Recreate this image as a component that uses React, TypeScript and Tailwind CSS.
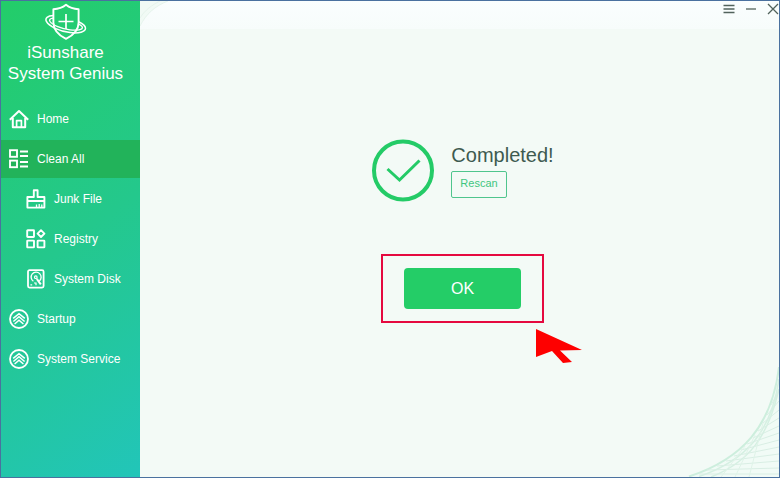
import { ReactNode } from 'react';

const RingUpIcon = () => (
  <svg width="20" height="20" viewBox="0 0 20 20" fill="none" stroke="white" strokeWidth="1.8">
    <circle cx="10" cy="10" r="9" />
    <path d="M4.2 9.4 10 4.6l5.8 4.8M4.4 12.5 10 7.8l5.6 4.7M5.6 15 10 11.2l4.4 3.8" strokeWidth="1.5" />
  </svg>
);

const HomeIcon = () => (
  <svg width="20" height="20" viewBox="0 0 20 20" fill="none" stroke="white" strokeWidth="2" strokeLinejoin="round">
    <path d="M.8 10.8 10 2l9.2 8.8M3.8 9v9.2h12.4V9" />
    <path d="M7.6 18v-6.4h4.8V18" strokeWidth="1.7" />
  </svg>
);

const CleanIcon = () => (
  <svg width="20" height="20" viewBox="0 0 20 20" fill="none" stroke="white" strokeWidth="1.9">
    <rect x="1" y="1.2" width="7" height="6.6" />
    <rect x="1" y="11.6" width="7" height="6.6" />
    <path d="M11 2.5h8M11 7h8M11 13h8M11 17.5h8" />
  </svg>
);

const JunkIcon = () => (
  <svg width="20" height="20" viewBox="0 0 20 20" fill="none" stroke="white" strokeWidth="1.9" strokeLinejoin="round">
    <path d="M7.8 8V1.2h3.8V8h6.8v10.6H1.4V8h6.4ZM1.4 12h17" />
    <path d="M10.5 18.5v-3M13.2 18.5v-3.5M15.8 18.5v-3" strokeWidth="1.3" />
  </svg>
);

const RegistryIcon = () => (
  <svg width="20" height="20" viewBox="0 0 20 20" fill="none" stroke="white" strokeWidth="1.9" strokeLinejoin="round">
    <rect x="1.2" y="1.2" width="6.8" height="6.8" rx=".5" />
    <rect x="1.2" y="11.6" width="6.8" height="6.8" rx=".5" />
    <rect x="11.6" y="11.6" width="6.8" height="6.8" rx=".5" />
    <path d="m15 1.2 3.4 3.4L15 8l-3.4-3.4Z" />
  </svg>
);

const DiskIcon = () => (
  <svg width="20" height="20" viewBox="0 0 20 20" fill="none" stroke="white" strokeWidth="1.8">
    <rect x="2" y="1.2" width="15.6" height="17.4" rx="1.5" />
    <path d="M7.4 12.3A5 5 0 1 1 13.3 12" strokeWidth="1.3" />
    <circle cx="9.8" cy="8.2" r="1.3" strokeWidth="1.2" />
    <path d="m10.8 9.8 4 5.6" strokeWidth="2" />
    <path d="M4.4 15.8h1.8M8 14h2v2.2" strokeWidth="1.2" />
  </svg>
);

type NavItem = { label: string; icon: ReactNode; sub?: boolean; active?: boolean };

const navItems: NavItem[] = [
  { label: 'Home', icon: <HomeIcon /> },
  { label: 'Clean All', icon: <CleanIcon />, active: true },
  { label: 'Junk File', icon: <JunkIcon />, sub: true },
  { label: 'Registry', icon: <RegistryIcon />, sub: true },
  { label: 'System Disk', icon: <DiskIcon />, sub: true },
  { label: 'Startup', icon: <RingUpIcon /> },
  { label: 'System Service', icon: <RingUpIcon /> },
];

function Sidebar() {
  return (
    <aside className="w-[139px] shrink-0 bg-linear-[145deg] from-[#23cd69] via-[#24c88c] to-[#22c5b9] text-white">
      <div className="flex flex-col items-center pt-0.5 pr-2.5">
        <svg width="42" height="38" viewBox="0 0 42 38" fill="none" stroke="white" strokeWidth="1.9" strokeLinejoin="round">
          <path d="M21 1.8c3.6 3 7.6 4.2 12.6 4.4v13.2c0 7.6-5 12.6-12.6 16.4C13.4 32 8.4 27 8.4 19.4V6.2C13.4 6 17.4 4.8 21 1.8Z" />
          <path d="M21 11v15M13.5 18.5h15" strokeWidth="1.7" />
          <path d="M8.4 12.6C2.5 12.8-.2 15.3 1.4 18.4c2.5 4.8 13 9.9 23.6 11.2 9 1.1 15.5-.8 15.5-4.3 0-2.2-2.5-4.6-6.9-6.6" strokeWidth="1.5" />
          <path d="M8.4 15.2c-3.4.2-4.6 1.6-3.4 3.3 2.6 3.7 11.5 7.4 20 8.4 7.4.9 12.4-.2 12.4-2.5 0-1-1.4-2.1-3.8-3.3" strokeWidth="1.3" />
        </svg>
        <h1 className="whitespace-nowrap pt-px text-center text-[17px] leading-[21px]">
          iSunshare
          <br />
          System Genius
        </h1>
      </div>
      <nav className="mt-4 flex flex-col gap-0.5">
        {navItems.map(({ label, icon, sub, active }) => (
          <a
            key={label}
            href="#"
            className={`flex h-[38px] items-center gap-2 text-xs ${sub ? 'pl-[25px]' : 'pl-2'} ${active ? 'bg-[#22b35a]' : ''}`}
          >
            {icon}
            {label}
          </a>
        ))}
      </nav>
    </aside>
  );
}

function TitleBar() {
  return (
    <header className="relative flex h-7 items-start justify-end gap-2.5 bg-linear-to-b from-[#fafefe] to-[#f7fcfb]">
      <svg className="absolute left-0 top-0" width="32" height="26" viewBox="0 0 32 26" fill="none">
        <path d="M0 0h28C15 5 6 13 0 25Z" fill="#f1faf5" />
        <path d="M28 0C15 5 6 13 0 25M20 0C12 4 5 9 0 17" stroke="#e6f4ec" />
      </svg>
      <button aria-label="Menu" className="pt-0.5">
        <svg width="12" height="12" viewBox="0 0 12 12" stroke="#52635c" strokeWidth="1.3">
          <path d="M.5 2.5h11M.5 6h11M.5 9.5h11" />
        </svg>
      </button>
      <button aria-label="Minimize" className="pt-0.5">
        <svg width="12" height="12" viewBox="0 0 12 12" stroke="#52635c" strokeWidth="1.3">
          <path d="M1 6h10" />
        </svg>
      </button>
      <button aria-label="Close" className="pt-0.5">
        <svg width="12" height="12" viewBox="0 0 12 12" stroke="#52635c" strokeWidth="1.3">
          <path d="m1 1 10 10M11 1 1 11" />
        </svg>
      </button>
    </header>
  );
}

function CornerPattern() {
  return (
    <svg className="absolute bottom-0 right-0" width="92" height="112" viewBox="0 0 92 112" fill="none">
      <path d="M92 0C84 62 55 94 0 112H92Z" fill="#f1fbf6" />
      <path d="M92 2C85 61 55 94 2 111.5" stroke="#cdeedd" strokeWidth="2" />
      <path d="M92 14C84 67 60 95 12 111.5M92 24C81 72 62 97 24 112" stroke="#d5f0e2" strokeWidth="1.5" />
      <path
        d="M84 40 92 26M80 50 92 36M76 58 92 45M71 66 92 53M66 73 92 61M60 79 92 68M54 85 92 75M47 91 92 82M39 96 92 89M30 101 92 96M20 105 92 103M12 109 92 109"
        stroke="#d9eee4"
      />
      <path d="M68 70 48 112M58 81 34 112M76 58 62 112" stroke="#dff3e8" />
    </svg>
  );
}

export default function App() {
  return (
    <div className="flex min-h-screen border border-[#4a719f] bg-[#f3faf6] font-['Liberation_Sans',Arial,sans-serif]">
      <Sidebar />
      <div className="relative flex flex-1 flex-col">
        <TitleBar />
        <CornerPattern />
        <main className="relative flex flex-1 flex-col items-center justify-center pb-11 pl-1.5">
          <div className="flex items-center gap-4">
            <svg width="64" height="64" viewBox="0 0 64 64" fill="none" stroke="#24cb67">
              <circle cx="32" cy="31.5" r="29" strokeWidth="4" />
              <path d="m16.5 30 12 11L48.5 21.5" strokeWidth="3" />
            </svg>
            <div className="flex flex-col items-start gap-1 pb-0.5">
              <h2 className="text-xl leading-6 text-[#3e5b50]">Completed!</h2>
              <button className="h-[27px] rounded-xs border border-[#4fc58d] px-2 pb-0.5 text-[11px] text-[#3fc67f]">
                Rescan
              </button>
            </div>
          </div>
          <div className="relative mt-[51px] border-2 border-[#e5093f] px-[21px] py-3">
            <button className="h-[41px] w-[117px] rounded-sm bg-[#24cd67] text-base text-white">OK</button>
            <svg className="absolute left-[153px] top-[73px]" width="47" height="36" viewBox="0 0 47 36">
              <path d="M0 0 46 21 24 21.5 36 33 27 34 16 22 0 28Z" fill="#fe0000" />
            </svg>
          </div>
        </main>
      </div>
    </div>
  );
}
